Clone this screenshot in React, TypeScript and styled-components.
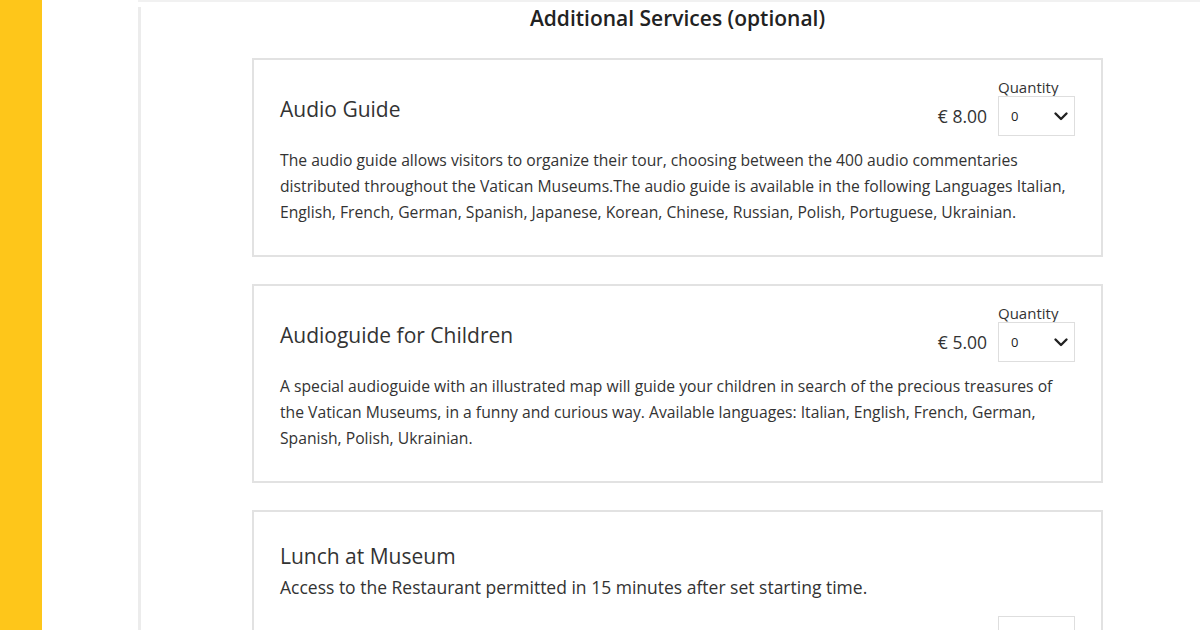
import React from 'react';
import styled, { createGlobalStyle } from 'styled-components';

const GlobalStyle = createGlobalStyle`
  html, body {
    margin: 0;
    padding: 0;
    background: #fff;
    font-family: 'Open Sans', 'Liberation Sans', sans-serif;
    color: #333;
  }
`;

const Page = styled.div`
  display: flex;
  width: 1200px;
  height: 630px;
  overflow: hidden;
  background: #fff;
`;

const Sidebar = styled.aside`
  flex: 0 0 42px;
  background: #fec61a;
`;

const Gutter = styled.div`
  flex: 0 0 96px;
`;

const Main = styled.main`
  flex: 1;
  display: flex;
  flex-direction: column;
  border-top: 2px solid #f1f1f1;
`;

const Content = styled.div`
  flex: 1;
  margin-top: 5px;
  border-left: 3px solid #ececec;
  padding-left: 111px;
`;

const Column = styled.div`
  width: 851px;
`;

const Heading = styled.h2`
  margin: 0 0 29px;
  font-size: 21px;
  line-height: 22px;
  font-weight: 600;
  color: #222;
  text-align: center;
`;

const Card = styled.section<{ $compact?: boolean }>`
  box-sizing: border-box;
  border: 2px solid #e2e2e2;
  padding: ${(p) => (p.$compact ? '25px 26px 0' : '18px 26px 29px')};
  margin-bottom: 27px;
  height: ${(p) => (p.$compact ? 'auto' : '199px')};
`;

const CardHead = styled.div`
  display: flex;
  justify-content: space-between;
  align-items: center;
`;

const CardTitle = styled.h3`
  margin: 0;
  padding-top: 4px;
  font-size: 21px;
  line-height: 30px;
  font-weight: 400;
  color: #333;
`;

const QtyLabel = styled.span`
  font-size: 15px;
  line-height: 18px;
  color: #333;
`;

const Price = styled.span`
  font-size: 17.5px;
  color: #333;
  text-align: right;
`;

const Select = styled.div`
  box-sizing: border-box;
  height: 40px;
  border: 1px solid #dedede;
  display: flex;
  align-items: center;
  justify-content: space-between;
  padding: 0 5px 0 12px;
  font-size: 13px;
  color: #222;
`;

const Order = styled.div`
  display: grid;
  grid-template-columns: auto 77px;
  grid-template-rows: 18px 40px;
  grid-template-areas:
    '. label'
    'price select';
  column-gap: 11px;
  align-items: center;

  ${QtyLabel} {
    grid-area: label;
  }
  ${Price} {
    grid-area: price;
  }
  ${Select} {
    grid-area: select;
  }
`;

const Description = styled.p<{ $large?: boolean }>`
  margin: ${(p) => (p.$large ? '3px 0 0' : '11px 0 0')};
  font-size: ${(p) => (p.$large ? '17.5px' : '15.7px')};
  line-height: 26px;
  color: #333;
`;

const MenuRow = styled.div`
  display: grid;
  grid-template-columns: 1fr auto 77px;
  column-gap: 11px;
  align-items: center;
  margin-top: 16px;
`;

const MenuName = styled.span`
  padding-left: 243px;
  font-size: 15px;
  color: #333;
`;

const Chevron = () => (
  <svg width="16" height="16" viewBox="0 0 16 16" fill="none">
    <polyline
      points="2.5,5.5 8,11 13.5,5.5"
      stroke="#222"
      strokeWidth="2.4"
      strokeLinecap="round"
      strokeLinejoin="round"
    />
  </svg>
);

const QuantitySelect = () => (
  <Select>
    <span>0</span>
    <Chevron />
  </Select>
);

type Service = {
  title: string;
  price: string;
  text: string;
};

const SERVICES: Service[] = [
  {
    title: 'Audio Guide',
    price: '€ 8.00',
    text:
      'The audio guide allows visitors to organize their tour, choosing between the 400 audio commentaries distributed throughout the Vatican Museums.The audio guide is available in the following Languages Italian, English, French, German, Spanish, Japanese, Korean, Chinese, Russian, Polish, Portuguese, Ukrainian.',
  },
  {
    title: 'Audioguide for Children',
    price: '€ 5.00',
    text:
      'A special audioguide with an illustrated map will guide your children in search of the precious treasures of the Vatican Museums, in a funny and curious way. Available languages: Italian, English, French, German, Spanish, Polish, Ukrainian.',
  },
];

const App = () => {
  return (
    <Page>
      <GlobalStyle />
      <Sidebar />
      <Gutter />
      <Main>
        <Content>
          <Column>
            <Heading>Additional Services (optional)</Heading>
            {SERVICES.map((s) => (
              <Card key={s.title}>
                <CardHead>
                  <CardTitle>{s.title}</CardTitle>
                  <Order>
                    <QtyLabel>Quantity</QtyLabel>
                    <Price>{s.price}</Price>
                    <QuantitySelect />
                  </Order>
                </CardHead>
                <Description>{s.text}</Description>
              </Card>
            ))}
            <Card $compact>
              <CardTitle>Lunch at Museum</CardTitle>
              <Description $large>
                Access to the Restaurant permitted in 15 minutes after set starting time.
              </Description>
              <MenuRow>
                <MenuName>Children Menu</MenuName>
                <Price>€ 15.00</Price>
                <QuantitySelect />
              </MenuRow>
            </Card>
          </Column>
        </Content>
      </Main>
    </Page>
  );
};

export default App;
